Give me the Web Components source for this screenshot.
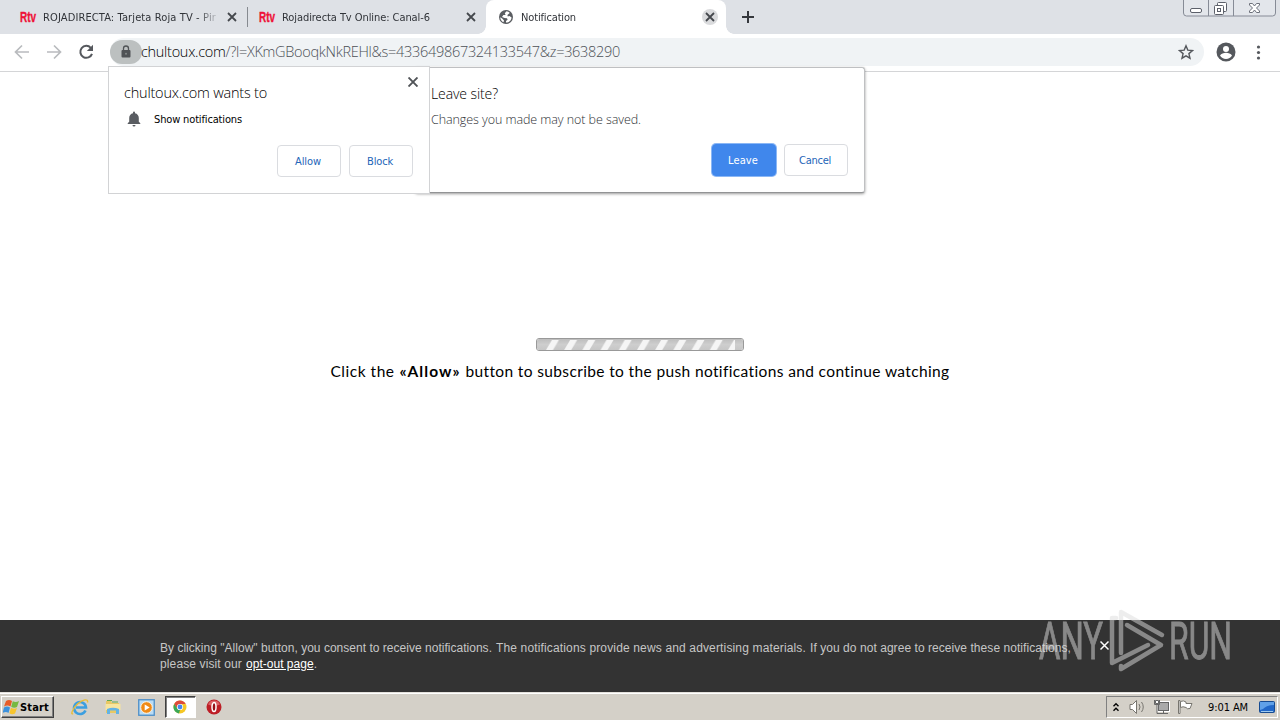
<!DOCTYPE html>
<html lang="en">
<head>
<meta charset="utf-8">
<title>Notification</title>
<style>
  html, body { margin: 0; height: 100%; overflow: hidden; }
  body { background: #fff; font-family: "DejaVu Sans Condensed", "DejaVu Sans", sans-serif; }
</style>
</head>
<body>
<desktop-screen>
  <tab-strip slot="tabs">
    <browser-tab icon="rtv" style="width:239px" divider><text-run width="173">ROJADIRECTA: Tarjeta Roja TV - Pir</text-run></browser-tab>
    <browser-tab icon="rtv" style="width:239px"><text-run width="148">Rojadirecta Tv Online: Canal-6</text-run></browser-tab>
    <browser-tab icon="globe" style="width:240px" active><text-run width="55">Notification</text-run></browser-tab>
  </tab-strip>
  <address-bar slot="toolbar"></address-bar>
  <push-page slot="page"></push-page>
  <task-bar slot="taskbar"></task-bar>
</desktop-screen>

<leave-dialog></leave-dialog>
<permission-prompt></permission-prompt>
<run-watermark></run-watermark>

<script>
class BaseElement extends HTMLElement {
  constructor() {
    super();
    this.attachShadow({ mode: 'open' });
  }

  connectedCallback() {
    this.render();
  }
}

class DesktopScreen extends BaseElement {
  render() {
    this.shadowRoot.innerHTML = `
      <style>
        :host { display: flex; flex-direction: column; width: 1280px; height: 720px; }
        main { flex: 1; display: flex; }
      </style>
      <slot name="tabs"></slot>
      <slot name="toolbar"></slot>
      <main><slot name="page"></slot></main>
      <slot name="taskbar"></slot>`;
  }
}

class TabStrip extends BaseElement {
  render() {
    this.shadowRoot.innerHTML = `
      <style>
        :host { display: flex; height: 34px; padding-left: 8px; background: #dee1e6; }
        .plus { width: 12px; height: 12px; margin: 11px 0 0 16px; }
        .win { margin: 0 4px 0 auto; width: 93px; height: 17px; }
        svg { display: block; }
      </style>
      <slot></slot>
      <svg class="plus" viewBox="0 0 12 12" stroke="#35383d" stroke-width="2"><path d="M6 0v12M0 6h12"/></svg>
      <svg class="win" viewBox="0 0 93 17" fill="none">
        <path d="M.5-1v14a3 3 0 0 0 3 3h86a3 3 0 0 0 3-3V-1z" fill="#e3e6eb" stroke="#868b96"/>
        <path d="M25.500 0v16M50.500 0v16" stroke="#868b96"/>
        <rect x="7.500" y="8.500" width="11" height="4" rx="1.500" stroke="#5c606a" fill="#fff"/>
        <rect x="34.500" y="2.500" width="9" height="9" rx="1" stroke="#5c606a" fill="#fff"/>
        <rect x="31.500" y="5.500" width="9" height="9" rx="1" stroke="#5c606a" fill="#fff"/>
        <rect x="34.500" y="8.500" width="3" height="3" stroke="#5c606a"/>
        <path d="M66.500 3.500h3l2 2.500 2-2.500h3v1.500L73.500 8l3 3v1.500h-3l-2-2.500-2 2.500h-3V11l3-3-3-3z" stroke="#6c707a" fill="#fff"/>
      </svg>`;
  }
}

class BrowserTab extends BaseElement {
  render() {
    const globe = `<svg width="14" height="14" viewBox="0 0 14 14"><circle cx="7" cy="7" r="7" fill="#5a5d61"/>
      <path d="M7.500 1.200 5.800 3.300 6.600 5H4.400L3 6.900 5.600 8.100 8 8.200 8.600 9.700 7 11v1.600c3.200 0 5.300-2.400 5.600-5.200L10.400 6 8.800 6.400 8.400 5l2.300-2.100C9.800 1.900 8.800 1.300 7.500 1.200zM1.300 7.200c0 2.300 1.300 4.100 3.200 5L5 10.400 3.200 8.600z" fill="#fff"/></svg>`;
    const rtv = `<svg width="16" height="20" viewBox="0 0 16 20"><text x="0" y="15" font-family="Liberation Sans" font-weight="700" font-size="15.500" fill="#ee1238" stroke="#ee1238" stroke-width=".4" textLength="16" lengthAdjust="spacingAndGlyphs">Rtv</text></svg>`;
    const icon = this.getAttribute('icon') === 'globe' ? globe : rtv;
    this.shadowRoot.innerHTML = `
      <style>
        :host { display: flex; box-sizing: border-box; height: 34px; align-items: center; padding: 0 10px 0 12px;
          font-size: 11px; color: #303338; position: relative; }
        :host([divider])::after { content: ""; width: 1px; height: 20px; background: #868a90; position: absolute; right: -1px; top: 7px; }
        :host([active]) { background: #fff; border-radius: 8px 8px 0 0; padding-left: 13px; }
        :host([active])::before, :host([active])::after { content: ""; position: absolute; bottom: 0; width: 8px; height: 8px; }
        :host([active])::before { left: -8px; background: radial-gradient(circle at 0 0, transparent 7.5px, #fff 8px); }
        :host([active])::after { right: -8px; background: radial-gradient(circle at 100% 0, transparent 7.500px, #fff 8px); }
        .icon { display: flex; margin-right: 7px; }
        .icon svg { overflow: visible; }
        :host([active]) .icon { margin-right: 8px; }
        .title { flex: 1; overflow: hidden; white-space: nowrap; margin-right: 8px;
          -webkit-mask-image: linear-gradient(90deg, #000 154px, transparent 178px); }
        .close { width: 16px; height: 16px; margin-right: -3px; border-radius: 8px; }
        :host([active]) .close { background: #dadbdd; margin-right: -2px; }
      </style>
      <span class="icon">${icon}</span>
      <span class="title"><slot></slot></span>
      <svg class="close" viewBox="0 0 16 16" stroke="#45484d" stroke-width="1.800"><path d="M4 4l8 8M12 4l-8 8"/></svg>`;
  }
}

class AddressBar extends BaseElement {
  render() {
    this.shadowRoot.innerHTML = `
      <style>
        :host { display: flex; align-items: center; box-sizing: border-box; height: 38px; padding: 0 12px 2px 12px;
          border-bottom: 1px solid #d4d5d7; background: #fff; }
        svg { display: block; flex: none; }
        .nav { display: flex; gap: 12px; width: 98px; }
        .box { display: flex; align-items: center; width: 1094px; height: 28px; border-radius: 14px; background: #f0f3f5; }
        .lock { display: flex; align-items: center; justify-content: center; width: 32px; height: 24px; border-radius: 12px; background: #bcc0c0; }
        .url { flex: 1; margin-left: -1px; font: 300 14.500px "Open Sans", "Noto Sans", sans-serif; color: #4c5055; }
        b { font-weight: 300; color: #000; }
        .star { margin-right: 10px; }
        .me { margin-left: 12px; }
        .dots { margin-left: 12px; }
      </style>
      <div class="nav">
        <svg width="20" height="20" viewBox="0 0 20 20" fill="none" stroke="#b9bbbe" stroke-width="1.700"><path d="M17 10H4M10 3.500 3.500 10l6.500 6.500"/></svg>
        <svg width="20" height="20" viewBox="0 0 20 20" fill="none" stroke="#b9bbbe" stroke-width="1.700"><path d="M3 10h13M10 3.500l6.500 6.500-6.500 6.500"/></svg>
        <svg width="20" height="20" viewBox="0 0 20 20"><path d="M14.800 5.800A6 6 0 1 0 16 11.800" fill="none" stroke="#55585d" stroke-width="2"/><path d="M17 2.800V9h-6.200z" fill="#55585d"/></svg>
      </div>
      <div class="box">
        <span class="lock"><svg width="10" height="13" viewBox="0 0 10 13"><rect x=".5" y="5" width="9" height="7.500" rx="1" fill="#505356"/><path d="M2.500 5.500V3.500a2.500 2.500 0 0 1 5 0v2" fill="none" stroke="#505356" stroke-width="1.300"/><circle cx="5" cy="8.700" r="1" fill="#85898a"/></svg></span>
        <span class="url"><text-run width="479"><b>chultoux.com</b>/?l=XKmGBooqkNkREHl&amp;s=433649867324133547&amp;z=3638290</text-run></span>
        <svg class="star" width="16" height="16" viewBox="0 0 16 16" fill="none" stroke="#55585d" stroke-width="1.400"><path d="M8 1.800l1.800 4.300 4.700.4-3.600 3.100 1.100 4.600L8 11.800l-4 2.400 1.100-4.600L1.500 6.500l4.700-.4z"/></svg>
      </div>
      <svg class="me" width="20" height="20" viewBox="0 0 20 20"><circle cx="10" cy="10" r="9.500" fill="#55585d"/><circle cx="10" cy="7" r="3" fill="#fff"/><path d="M4 13.600c1-2 3.800-2.800 6-2.800s5 .8 6 2.800A7 7 0 0 1 10 17a7 7 0 0 1-6-3.400z" fill="#fff"/></svg>
      <svg class="dots" width="20" height="20" viewBox="0 0 20 20" fill="#55585d"><circle cx="10.500" cy="5" r="1.600"/><circle cx="10.500" cy="10.500" r="1.600"/><circle cx="10.500" cy="16" r="1.600"/></svg>`;
  }
}

class PushPage extends BaseElement {
  render() {
    this.shadowRoot.innerHTML = `
      <style>
        :host { display: flex; flex-direction: column; flex: 1; background: #fff; }
        .content { flex: 1; display: flex; flex-direction: column; align-items: center; padding-top: 266px; }
        .bar { box-sizing: border-box; width: 208px; height: 13px; border: 1px solid #999; border-radius: 3px; overflow: hidden; }
        .bar svg { display: block; }
        .msg { display: flex; gap: 5px; margin-top: 9px; font: 15.500px/23px Lato, "Open Sans", sans-serif; color: #000; }
        footer { display: flex; box-sizing: border-box; height: 72px; padding: 20px 0 0 160px; background: #333; color: #c6c6c6;
          font: 12px/16px "Liberation Sans", Arial, sans-serif; }
        .consent { width: 938px; display: flex; flex-direction: column; }
        .line { display: flex; gap: 4px; }
        a { color: #fff; text-decoration: underline; }
        footer svg { margin: 0 0 0 1px; }
      </style>
      <div class="content">
        <div class="bar"><svg width="206" height="11">
          <defs>
            <linearGradient id="g" x2="0" y2="1"><stop offset="0" stop-color="#bdbdbd"/><stop offset=".5" stop-color="#cecece"/><stop offset="1" stop-color="#c6c6c6"/></linearGradient>
            <pattern id="p" width="18.200" height="11" x="8" patternUnits="userSpaceOnUse"><path d="M1 11 7.500 0h7L8 11z" fill="#f5f5f5"/></pattern>
          </defs>
          <rect width="206" height="11" fill="url(#g)"/><rect x="8" y="1" width="190" height="10" fill="url(#p)"/>
        </svg></div>
        <div class="msg">
          <text-run width="64">Click the</text-run>
          <b><text-run width="61">«Allow»</text-run></b>
          <text-run width="484">button to subscribe to the push notifications and continue watching</text-run>
        </div>
      </div>
      <footer>
        <div class="consent">
          <div class="line">
            <text-run width="332">By clicking "Allow" button, you consent to receive notifications.</text-run>
            <text-run width="310">The notifications provide news and advertising materials.</text-run>
            <text-run width="261">If you do not agree to receive these notifications,</text-run>
          </div>
          <div class="line">
            <text-run width="82">please visit our</text-run>
            <text-run width="71"><a>opt-out page</a>.</text-run>
          </div>
        </div>
        <svg width="12" height="12" viewBox="0 0 12 12" stroke="#fff" stroke-width="1.500"><path d="M1.500 1.500l8 8M9.500 1.500l-8 8"/></svg>
      </footer>`;
  }
}

class TaskBar extends BaseElement {
  render() {
    this.shadowRoot.innerHTML = `
      <style>
        :host { display: flex; align-items: center; box-sizing: border-box; height: 28px; padding: 1px 2px 0 1px;
          background: #d4d0c8; border-top: 1px solid #e4e1dc; box-shadow: inset 0 1px #fff; }
        svg { display: block; flex: none; }
        .start { display: flex; align-items: center; gap: 0; box-sizing: border-box; width: 53px; height: 22px; padding-left: 1px;
          border: 1px solid; border-color: #fff #404040 #404040 #fff; box-shadow: inset -1px -1px #808080;
          font: bold 11px "DejaVu Sans Condensed", sans-serif; color: #000; }
        .quick { display: flex; align-items: center; margin-left: 9px; }
        .quick span { display: flex; align-items: center; justify-content: center; box-sizing: border-box; width: 33.500px; height: 22px; }
        .quick .on { width: 31px; background: #fff; border: 1px solid; border-color: #404040 #fff #fff #404040; box-shadow: inset 1px 1px #808080; margin: 0 2px 0 1px; }
        .tray { display: flex; align-items: center; box-sizing: border-box; width: 172px; height: 22px; margin-left: auto; padding-left: 5px;
          border: 1px solid; border-color: #808080 #fff #fff #808080; font-size: 11px; color: #000; }
        .time { width: 42px; margin: 0 9px 0 14px; }
      </style>
      <div class="start">
        <svg width="17" height="16" viewBox="0 0 17 16"><path d="M3 2q3-2 6 0L7.500 7.500Q4.500 5.500 1 7.500z" fill="#e85b27"/><path d="M9.800 2.300q3 1.500 6.200-.3l-2 6q-3 1.500-5.800-.3z" fill="#77b942"/><path d="M1 8.500q3-2 6 0L5.500 14Q3 12-.5 14z" fill="#3c91dc"/><path d="M8 8.800q3 1.700 6 .2l-2 5.500q-3 1.500-5.600-.2z" fill="#f7c52e"/></svg>
        <text-run width="29">Start</text-run>
      </div>
      <div class="quick">
        <span><svg width="18" height="18" viewBox="0 0 18 18" fill="none"><path d="M14.500 12.500A6 6 0 1 1 15 9.500H5" stroke="#3c9fe0" stroke-width="2.600"/><path d="M2 15.500C-.5 17.500 1 11 6.500 6S17.500.5 16.500 4.500" stroke="#e9bd38" stroke-width="1.400"/></svg></span>
        <span><svg width="18" height="18" viewBox="0 0 18 18"><path d="M2 3h5l1 2h7v10H2z" fill="#e8c864"/><path d="M3 2.500h5M8 4h6" stroke="#5fa950"/><path d="M1.500 6h15v6h-15z" fill="#f7e5a0"/><path d="M3 16v-5q6-2.500 12 0v5h-3v-3.500H6V16z" fill="#63b3e5"/></svg></span>
        <span><svg width="17" height="17" viewBox="0 0 17 17"><rect x=".75" y=".75" width="15.500" height="15.500" fill="#b9dcf6" stroke="#4c8ec8" stroke-width="1.300"/><circle cx="8.500" cy="8.500" r="5.800" fill="#f08a16" stroke="#fff3df"/><path d="M6.700 5.500v6l5-3z" fill="#fff"/></svg></span>
        <span class="on"><svg width="14" height="14" viewBox="0 0 14 14"><circle cx="7" cy="7" r="6.500" fill="#f6c724"/><path d="M1.200 3.900A6.500 6.500 0 0 1 12.700 4H7L4.500 8.800z" fill="#dd4b3b"/><path d="M1.200 3.900 4.500 8.800 7 10l-1 3.400A6.500 6.500 0 0 1 1.200 3.900z" fill="#3aa757"/><circle cx="7" cy="7" r="3.100" fill="#fff"/><circle cx="7" cy="7" r="2.400" fill="#4587ed"/></svg></span>
        <span><svg width="16" height="16" viewBox="0 0 16 16"><circle cx="8" cy="8" r="7.500" fill="#bd1e26"/><path d="M2 5.500a6.500 6.500 0 0 1 12 0Q8 8 2 5.500z" fill="#db6065"/><ellipse cx="8" cy="8" rx="2" ry="4.500" fill="#971018" stroke="#fff" stroke-width="1.500"/></svg></span>
      </div>
      <div class="tray">
        <svg width="8" height="10" viewBox="0 0 8 10" fill="none" stroke="#000" stroke-width="1.400"><path d="M1.500 4.200 4 1.700l2.500 2.500M1.500 8.700 4 6.200l2.500 2.500"/></svg>
        <svg style="margin-left:9px" width="17" height="16" viewBox="0 0 17 16" fill="none" stroke="#77756f"><path d="M1 5.500h2.500L7.500 1.500v13L3.500 10.500H1z" fill="#fff"/><path d="M10 5q2 3 0 6M12.500 3q3.500 5 0 10" /></svg>
        <svg style="margin-left:7px" width="17" height="16" viewBox="0 0 17 16" fill="none" stroke="#666"><rect x="5.500" y="3.500" width="10" height="8" fill="#aaa" stroke="#fff" stroke-width="3"/><rect x="5.500" y="3.500" width="10" height="8" fill="#aaa"/><path d="M6 14.500h9M10.500 12v2" /><path d="M1.500 1v4.500h5V1M4 6v8.500h3"/><path d="M2.500 1.500h3v3h-3z" fill="#fff"/></svg>
        <svg style="margin-left:7px" width="17" height="16" viewBox="0 0 17 16" fill="#fff" stroke="#77756f"><path d="M1.500 1.500h1.500v13H1.500z"/><path d="M3.500 2.500q3-1.500 5.500.5v1.500h6l-2 5q-3 1-4-1-3-1.500-5.500 0z"/></svg>
        <span class="time"><text-run width="40">9:01 AM</text-run></span>
        <svg width="16" height="14" viewBox="0 0 16 14"><rect x=".5" y="1.500" width="15" height="11" rx="1" fill="#2268c8" stroke="#164b91"/><path d="M1 2h14v3Q8 5 4 9l-3 1z" fill="#60a1e8"/><path d="M2 11.500h12" stroke="#9fcaee"/></svg>
      </div>`;
  }
}

class DialogButton extends BaseElement {
  render() {
    this.shadowRoot.innerHTML = `
      <style>
        :host { display: flex; align-items: center; justify-content: center; box-sizing: border-box; width: 64px; height: 32px; padding-right: 2px;
          border: 1px solid #dadce0; border-radius: 4px; background: #fff; color: #2365b8; font-size: 11px; }
        :host([primary]) { background: #4087ec; border-color: #4087ec; color: #fff; box-shadow: 0 0 0 1px #8bb7f5; }
      </style>
      <slot></slot>`;
  }
}

class PermissionPrompt extends BaseElement {
  render() {
    this.shadowRoot.innerHTML = `
      <style>
        :host { position: absolute; left: 108px; top: 66px; display: flex; flex-direction: column; box-sizing: border-box;
          width: 322px; height: 128px; padding: 0 16px 16px 15px; border: 1px solid #d2d3d5; background: #fff; color: #000; }
        svg { display: block; }
        header { display: flex; justify-content: space-between; height: 37px; }
        h1 { margin: 16px 0 0; font: 300 14.500px/20px "Open Sans", sans-serif; }
        header svg { margin: 10px -5px 0 0; }
        .row { display: flex; align-items: center; gap: 13px; height: 30px; padding-left: 3px; font-size: 11px; }
        footer { display: flex; justify-content: flex-end; gap: 8px; margin-top: auto; }
      </style>
      <header>
        <h1><text-run width="143">chultoux.com wants to</text-run></h1>
        <svg width="10" height="10" viewBox="0 0 10 10" stroke="#505357" stroke-width="1.900"><path d="M.5.5l9 9M9.500.5l-9 9"/></svg>
      </header>
      <div class="row">
        <svg width="14" height="16" viewBox="0 0 14 16" fill="#5a5d62"><path d="M7 .5a1 1 0 0 1 1 1v.7c2.400.5 3.800 2.400 3.800 4.800v3.800l1.500 1.500v.7H.7v-.7l1.500-1.500V7c0-2.400 1.400-4.300 3.800-4.800v-.7a1 1 0 0 1 1-1zM5.500 14h3a1.500 1.500 0 0 1-3 0z"/></svg>
        <text-run width="88">Show notifications</text-run>
      </div>
      <footer><dialog-button><text-run width="26">Allow</text-run></dialog-button><dialog-button><text-run width="26">Block</text-run></dialog-button></footer>`;
  }
}

class LeaveDialog extends BaseElement {
  render() {
    this.shadowRoot.innerHTML = `
      <style>
        :host { position: absolute; left: 415px; top: 67px; display: flex; flex-direction: column; box-sizing: border-box;
          width: 450px; height: 126px; padding: 16px 16px 16px 15px; border: 1px solid #bfc0c2; border-bottom-color: #929395; border-radius: 3px;
          background: #fff; box-shadow: 0 1px 3px rgba(0, 0, 0, .4); font-family: "Open Sans", sans-serif; }
        h1 { margin: 0; font-size: 14px; line-height: 20px; font-weight: 300; color: #000; }
        p { margin: 6px 0 0; font-size: 12.500px; line-height: 19px; font-weight: 300; color: #2c2f34; }
        footer { display: flex; justify-content: flex-end; gap: 8px; margin-top: auto; font-family: "DejaVu Sans Condensed", sans-serif; }
      </style>
      <h1><text-run width="67">Leave site?</text-run></h1>
      <p><text-run width="210">Changes you made may not be saved.</text-run></p>
      <footer><dialog-button primary><text-run width="30">Leave</text-run></dialog-button><dialog-button><text-run width="32">Cancel</text-run></dialog-button></footer>`;
  }
}

class RunWatermark extends BaseElement {
  render() {
    this.shadowRoot.innerHTML = `
      <style>
        :host { position: absolute; left: 1030px; top: 600px; display: block; opacity: .5; }
        svg { display: block; overflow: visible; }
        text { font: 400 52px Roboto, sans-serif; stroke: #ddd; stroke-width: .9px; }
      </style>
      <svg width="210" height="80" viewBox="0 0 210 80" fill="#ddd">
        <text x="9" y="59" textLength="64" lengthAdjust="spacingAndGlyphs">ANY</text>
        <text x="139" y="59" textLength="63" lengthAdjust="spacingAndGlyphs">RUN</text>
        <path fill="none" stroke="#ddd" stroke-width="4.500" stroke-linejoin="round" stroke-linecap="round"
          d="M86 18h-4v45l36-18M91 53V12l41 23M97 25l34 20-40 24v-3"/>
      </svg>`;
  }
}

// A single line whose tracking is adjusted so that it fills the given width
class TextRun extends BaseElement {
  render() {
    this.shadowRoot.innerHTML = `
      <style>
        :host { display: inline-block; white-space: nowrap; }
      </style>
      <span><slot></slot></span>`;
    const span = this.shadowRoot.querySelector('span');
    const width = Number(this.getAttribute('width'));
    const natural = span.getBoundingClientRect().width;
    const count = this.textContent.trim().length;
    this.style.width = width + 'px';
    span.style.letterSpacing = (width - natural) / count + 'px';
  }
}

customElements.define('desktop-screen', DesktopScreen);
customElements.define('tab-strip', TabStrip);
customElements.define('browser-tab', BrowserTab);
customElements.define('address-bar', AddressBar);
customElements.define('push-page', PushPage);
customElements.define('task-bar', TaskBar);
customElements.define('dialog-button', DialogButton);
customElements.define('permission-prompt', PermissionPrompt);
customElements.define('leave-dialog', LeaveDialog);
customElements.define('run-watermark', RunWatermark);
customElements.define('text-run', TextRun);
</script>
</body>
</html>
